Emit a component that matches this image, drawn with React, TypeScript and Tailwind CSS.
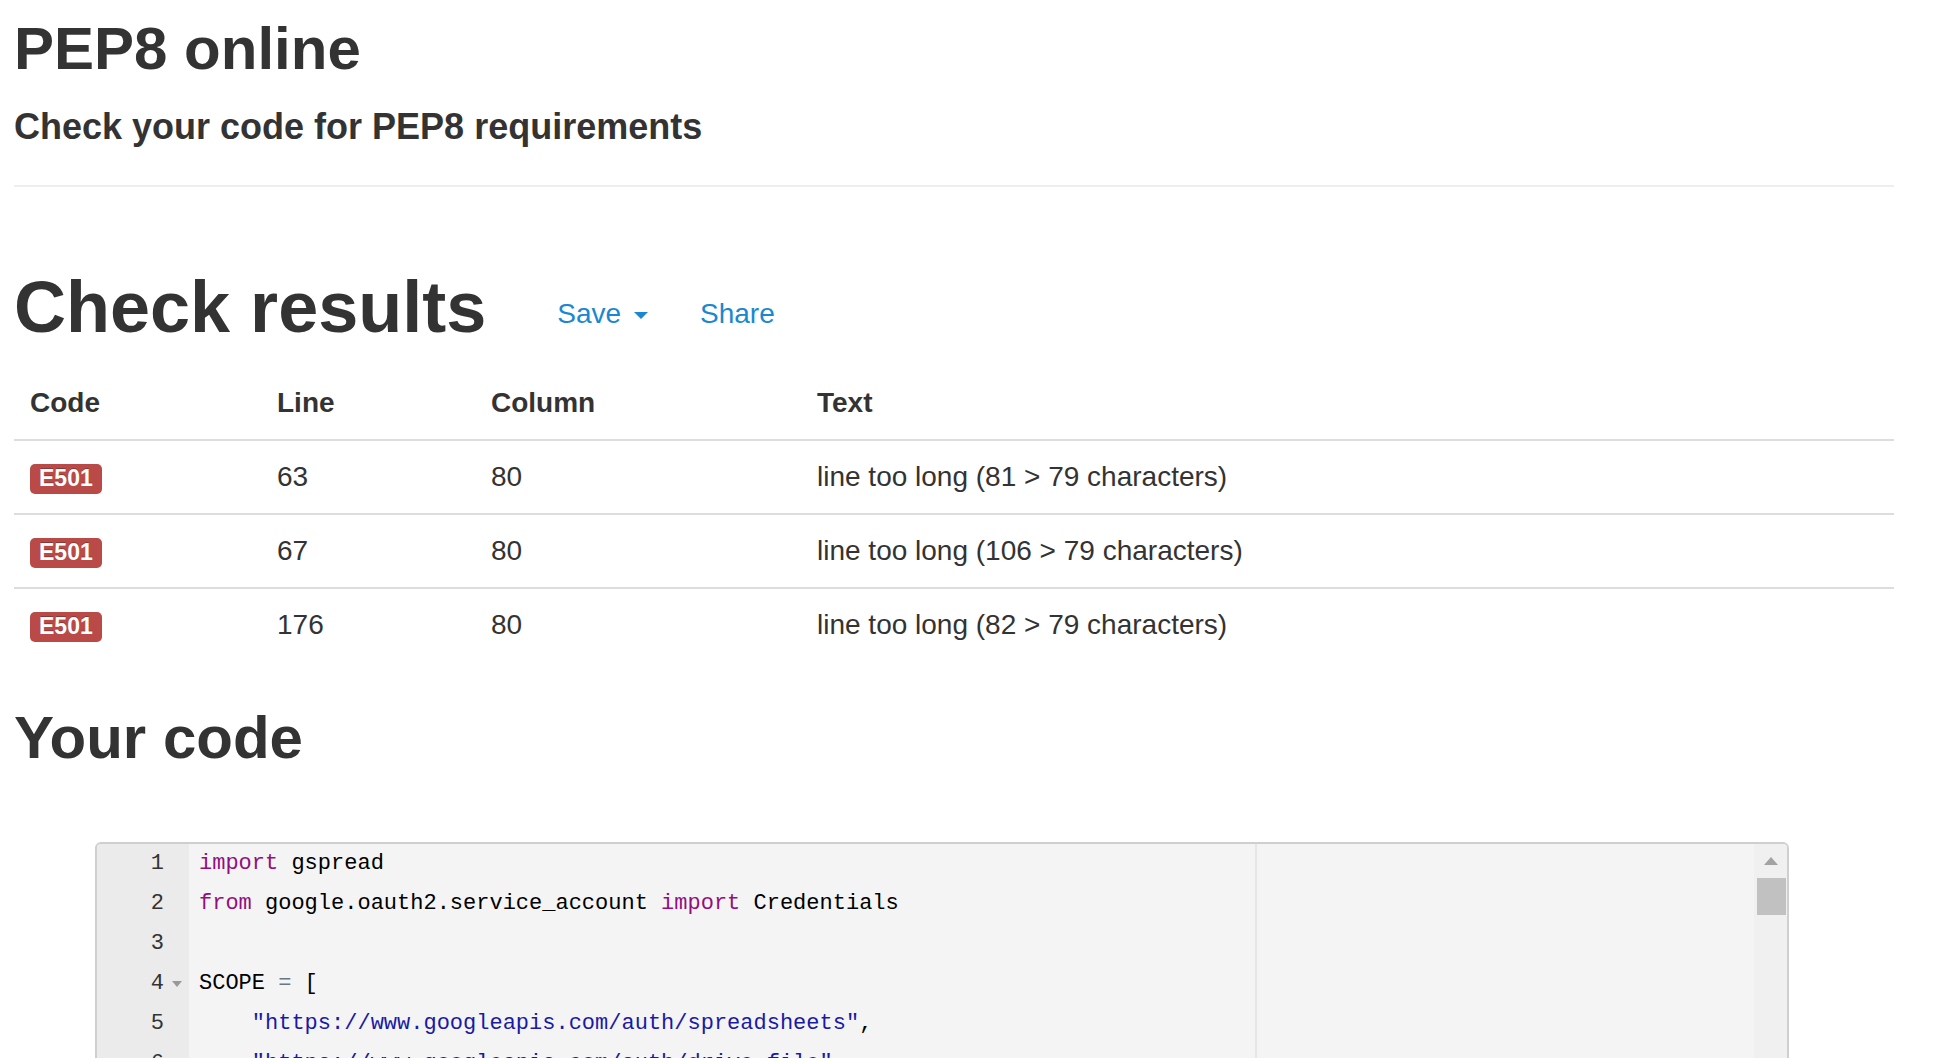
import React from "react";

type Tok = { t: string; c?: string };

const KW = "text-[#930f80]";
const STR = "text-[#1a1aa6]";
const OP = "text-[#687687]";

const results = [
  { code: "E501", line: 63, column: 80, text: "line too long (81 > 79 characters)" },
  { code: "E501", line: 67, column: 80, text: "line too long (106 > 79 characters)" },
  { code: "E501", line: 176, column: 80, text: "line too long (82 > 79 characters)" },
];

const codeLines: Tok[][] = [
  [{ t: "import", c: KW }, { t: " gspread" }],
  [
    { t: "from", c: KW },
    { t: " google.oauth2.service_account " },
    { t: "import", c: KW },
    { t: " Credentials" },
  ],
  [],
  [{ t: "SCOPE " }, { t: "=", c: OP }, { t: " [" }],
  [{ t: "    " }, { t: '"https://www.googleapis.com/auth/spreadsheets"', c: STR }, { t: "," }],
  [{ t: "    " }, { t: '"https://www.googleapis.com/auth/drive.file"', c: STR }, { t: "," }],
  [{ t: "    " }, { t: '"https://www.googleapis.com/auth/drive"', c: STR }],
  [{ t: "    ]" }],
  [],
  [
    { t: "CREDS " },
    { t: "=", c: OP },
    { t: " Credentials.from_service_account_file(" },
    { t: "'creds.json'", c: STR },
    { t: ")" },
  ],
];

const App = () => {
  return (
    <div className="h-[1058px] overflow-hidden bg-white text-[#333] font-['Liberation_Sans',Arial,sans-serif]">
      <div className="pl-[14px] pr-[43px]">
        <h1 className="pt-[14px] text-[60px] leading-[69px] font-bold">PEP8 online</h1>
        <h4 className="mt-[24px] text-[36px] leading-[40px] font-bold">
          Check your code for PEP8 requirements
        </h4>
        <div className="mt-[38px] h-[2px] bg-[#eee]" />

        <div className="mt-[81px] flex items-start">
          <h1 className="text-[72px] leading-[79px] font-bold">Check results</h1>
          <div className="ml-[71px] pt-[26px] flex items-center text-[28px] leading-[40px] text-[#1a88d0]">
            <span>Save</span>
            <span className="ml-[13px] mt-[2px] w-0 h-0 border-l-[7px] border-r-[7px] border-t-[7px] border-l-transparent border-r-transparent border-t-[#1a88d0]" />
            <span className="ml-[52px]">Share</span>
          </div>
        </div>

        {/* results table */}
        <div className="mt-[20px] text-[28px] leading-[40px]">
          <div className="grid grid-cols-[247px_214px_326px_1fr] h-[74px] border-b-2 border-[#ddd] font-bold items-center">
            <div className="px-[16px]">Code</div>
            <div className="px-[16px]">Line</div>
            <div className="px-[16px]">Column</div>
            <div className="px-[16px]">Text</div>
          </div>
          {results.map((r, i) => (
            <div
              key={i}
              className={
                "grid grid-cols-[247px_214px_326px_1fr] h-[72px] items-center" +
                (i > 0 ? " border-t-2 border-[#ddd] h-[74px]" : "")
              }
            >
              <div className="px-[16px]">
                <span className="inline-flex items-center h-[30px] px-[9px] rounded-[5px] bg-[#b94a48] text-white text-[23px] font-bold leading-none [text-shadow:0_-1px_0_rgba(0,0,0,0.25)]">
                  {r.code}
                </span>
              </div>
              <div className="px-[16px]">{r.line}</div>
              <div className="px-[16px]">{r.column}</div>
              <div className="px-[16px]">{r.text}</div>
            </div>
          ))}
        </div>

        <h2 className="mt-[44px] text-[60px] leading-[66px] font-bold">Your code</h2>

        {/* editor */}
        <div className="mt-[71px] ml-[81px] w-[1694px] h-[420px] border-2 border-[#cfcfcf] rounded-t-[6px] bg-[#f4f4f4] flex overflow-hidden font-['Liberation_Mono',monospace] text-[22px] leading-[40px]">
          <div className="w-[92px] shrink-0 bg-[#ebebeb] text-[#333]">
            {codeLines.map((_, i) => (
              <div key={i} className="flex justify-end items-center h-[40px]">
                <span>{i + 1}</span>
                <span className="w-[25px] flex justify-center">
                  {i === 3 && (
                    <svg width="10" height="6" viewBox="0 0 10 6">
                      <path d="M0 0 L10 0 L5 6 Z" fill="#999" />
                    </svg>
                  )}
                </span>
              </div>
            ))}
          </div>
          <div className="relative flex-1 pl-[10px] text-black">
            <div className="absolute top-0 bottom-0 left-[1066px] w-[2px] bg-[#e6e6e6]" />
            {codeLines.map((line, i) => (
              <div key={i} className="h-[40px] whitespace-pre">
                {line.map((tok, j) => (
                  <span key={j} className={tok.c}>
                    {tok.t}
                  </span>
                ))}
              </div>
            ))}
          </div>
          <div className="w-[33px] shrink-0 bg-[#f0f0f0] flex flex-col items-center">
            <svg className="mt-[13px]" width="14" height="8" viewBox="0 0 14 8">
              <path d="M7 0 L14 8 L0 8 Z" fill="#a3a3a3" />
            </svg>
            <div className="mt-[13px] ml-[1px] w-[29px] h-[37px] bg-[#c1c1c1]" />
          </div>
        </div>
      </div>
    </div>
  );
};

export default App;
